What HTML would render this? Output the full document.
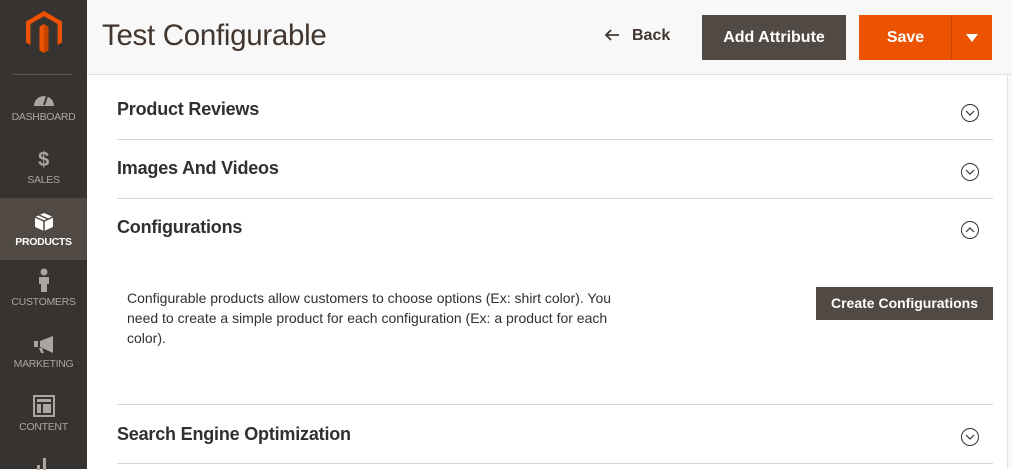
<!DOCTYPE html>
<html><head><style>
*{margin:0;padding:0;box-sizing:border-box}
body{width:1012px;height:469px;overflow:hidden;background:#fff;font-family:"Liberation Sans",sans-serif;position:relative;color:#303030}
.side{position:absolute;left:0;top:0;width:87px;height:469px;background:#373330}
.logo{position:absolute;left:26px;top:11px}
.sep{position:absolute;left:13px;top:74px;width:60px;height:1px;background:#5a5450}
.item{position:absolute;left:0;width:87px;text-align:center;color:#aaa6a0;font-size:10.5px;letter-spacing:-0.3px}
.item svg{display:block;margin:0 auto 4px}
.active{background:#514943;color:#fff;font-weight:bold}
.head{position:absolute;left:87px;top:0;width:925px;height:75px;background:#f8f8f8;border-bottom:1px solid #e3e3e3}
.rstrip{position:absolute;left:1007px;top:75px;width:5px;height:394px;background:#f8f8f8;border-left:1px solid #e3e3e3}
h1{position:absolute;left:102px;top:19px;font-weight:normal;font-size:29.5px;color:#41362f;letter-spacing:-0.3px}
.back{position:absolute;left:604px;top:27px;font-size:16px;color:#41362f;font-weight:bold}
.btn{position:absolute;color:#fff;font-weight:bold;font-size:16px;text-align:center}
.sec{position:absolute;left:117px;width:876px;border-bottom:1px solid #d6d6d6}
.sec span{position:absolute;left:0;font-size:18px;font-weight:bold;color:#303030;letter-spacing:-0.2px}
.circ{position:absolute;right:14px;width:18px;height:18px;border:1px solid #333;border-radius:50%}
.circ svg{position:absolute;left:3px;top:4px}
</style></head><body>
<div class="side">
 <svg class="logo" width="36" height="42" viewBox="0 0 36 42"><path d="M18 0L36 10.5V31.5L31.5 34V13L18 5.2 4.5 13V34L0 31.5V10.5Z" fill="#eb5202"/><path d="M13.5 15.5L18 13V42L13.5 39.4Z" fill="#eb5202"/><path d="M18 13L22.5 15.5V39.4L18 42Z" fill="#c64400"/></svg>
 <div class="sep"></div>
 <div class="item" style="top:91px"><svg width="22" height="16" viewBox="0 0 22 16"><path d="M1 15A10 10 0 0 1 21 15Z" fill="#aaa6a0"/><path d="M11 14L14 5" stroke="#373330" stroke-width="2"/></svg>DASHBOARD</div>
 <div class="item" style="top:149px"><div style="font-size:20px;font-weight:bold;line-height:22px;margin-bottom:3px">$</div>SALES</div>
 <div class="item active" style="top:198px;height:62px;padding-top:14px"><svg width="20" height="20" viewBox="0 0 20 20"><path d="M10 1L19 5V15L10 19 1 15V5Z" fill="#fff"/><path d="M1 5L10 9 19 5M10 9V19M5 3L14 7" stroke="#514943" stroke-width="1.5" fill="none"/></svg>PRODUCTS</div>
 <div class="item" style="top:268px"><svg width="12" height="24" viewBox="0 0 12 24"><circle cx="6" cy="4" r="3.5" fill="#aaa6a0"/><path d="M1 9H11V16H9V24H3V16H1Z" fill="#aaa6a0"/></svg>CUSTOMERS</div>
 <div class="item" style="top:336px"><svg width="22" height="18" viewBox="0 0 22 18"><path d="M1 5H5V11H1Z M7 5L20 0V17L7 11Z M9 12L11 17H8L6 12Z" fill="#aaa6a0"/></svg>MARKETING</div>
 <div class="item" style="top:395px"><svg width="22" height="22" viewBox="0 0 22 22"><rect x="1" y="1" width="20" height="20" fill="none" stroke="#aaa6a0" stroke-width="2"/><rect x="4" y="4" width="14" height="3" fill="#aaa6a0"/><rect x="4" y="9" width="4" height="9" fill="#aaa6a0"/><rect x="10" y="9" width="8" height="9" fill="#aaa6a0"/></svg>CONTENT</div>
 <div class="item" style="top:456px"><svg width="20" height="14" viewBox="0 0 20 14"><rect x="9" y="2" width="3" height="12" fill="#aaa6a0"/><rect x="3" y="9" width="3" height="5" fill="#aaa6a0"/></svg></div>
</div>
<div class="head"></div>
<div class="rstrip"></div>
<h1>Test Configurable</h1>
<div class="back"><svg width="16" height="12" viewBox="0 0 16 12" style="vertical-align:-1px;margin-right:12px"><path d="M15 6H2M7 1L2 6 7 11" stroke="#41362f" stroke-width="1.8" fill="none"/></svg>Back</div>
<div class="btn" style="left:702px;top:15px;width:144px;height:45px;line-height:45px;background:#514943">Add Attribute</div>
<div class="btn" style="left:859px;top:15px;width:93px;height:45px;line-height:45px;background:#eb5202">Save</div>
<div class="btn" style="left:951px;top:15px;width:41px;height:45px;background:#eb5202;border-left:1px solid #c94400"><svg width="12" height="8" viewBox="0 0 12 8" style="margin-top:19px"><path d="M0 0H12L6 8Z" fill="#fff"/></svg></div>

<div class="sec" style="top:76px;height:64px"><span style="top:23px">Product Reviews</span><div class="circ" style="top:28px"><svg width="10" height="8"><path d="M1 2L5 6 9 2" stroke="#333" fill="none" stroke-width="1.2"/></svg></div></div>
<div class="sec" style="top:140px;height:59px"><span style="top:18px">Images And Videos</span><div class="circ" style="top:23px"><svg width="10" height="8"><path d="M1 2L5 6 9 2" stroke="#333" fill="none" stroke-width="1.2"/></svg></div></div>
<div class="sec" style="top:199px;height:206px"><span style="top:18px">Configurations</span><div class="circ" style="top:22px"><svg width="10" height="8"><path d="M1 6L5 2 9 6" stroke="#333" fill="none" stroke-width="1.2"/></svg></div>
 <div style="position:absolute;left:10px;top:89px;width:560px;font-size:14px;line-height:20px;color:#303030;white-space:nowrap">Configurable products allow customers to choose options (Ex: shirt color). You<br>need to create a simple product for each configuration (Ex: a product for each<br>color).</div>
 <div class="btn" style="left:699px;top:88px;width:177px;height:33px;line-height:33px;background:#514943;font-size:14px">Create Configurations</div>
</div>
<div class="sec" style="top:405px;height:59px"><span style="top:19px">Search Engine Optimization</span><div class="circ" style="top:23px"><svg width="10" height="8"><path d="M1 2L5 6 9 2" stroke="#333" fill="none" stroke-width="1.2"/></svg></div></div>
</body></html>
